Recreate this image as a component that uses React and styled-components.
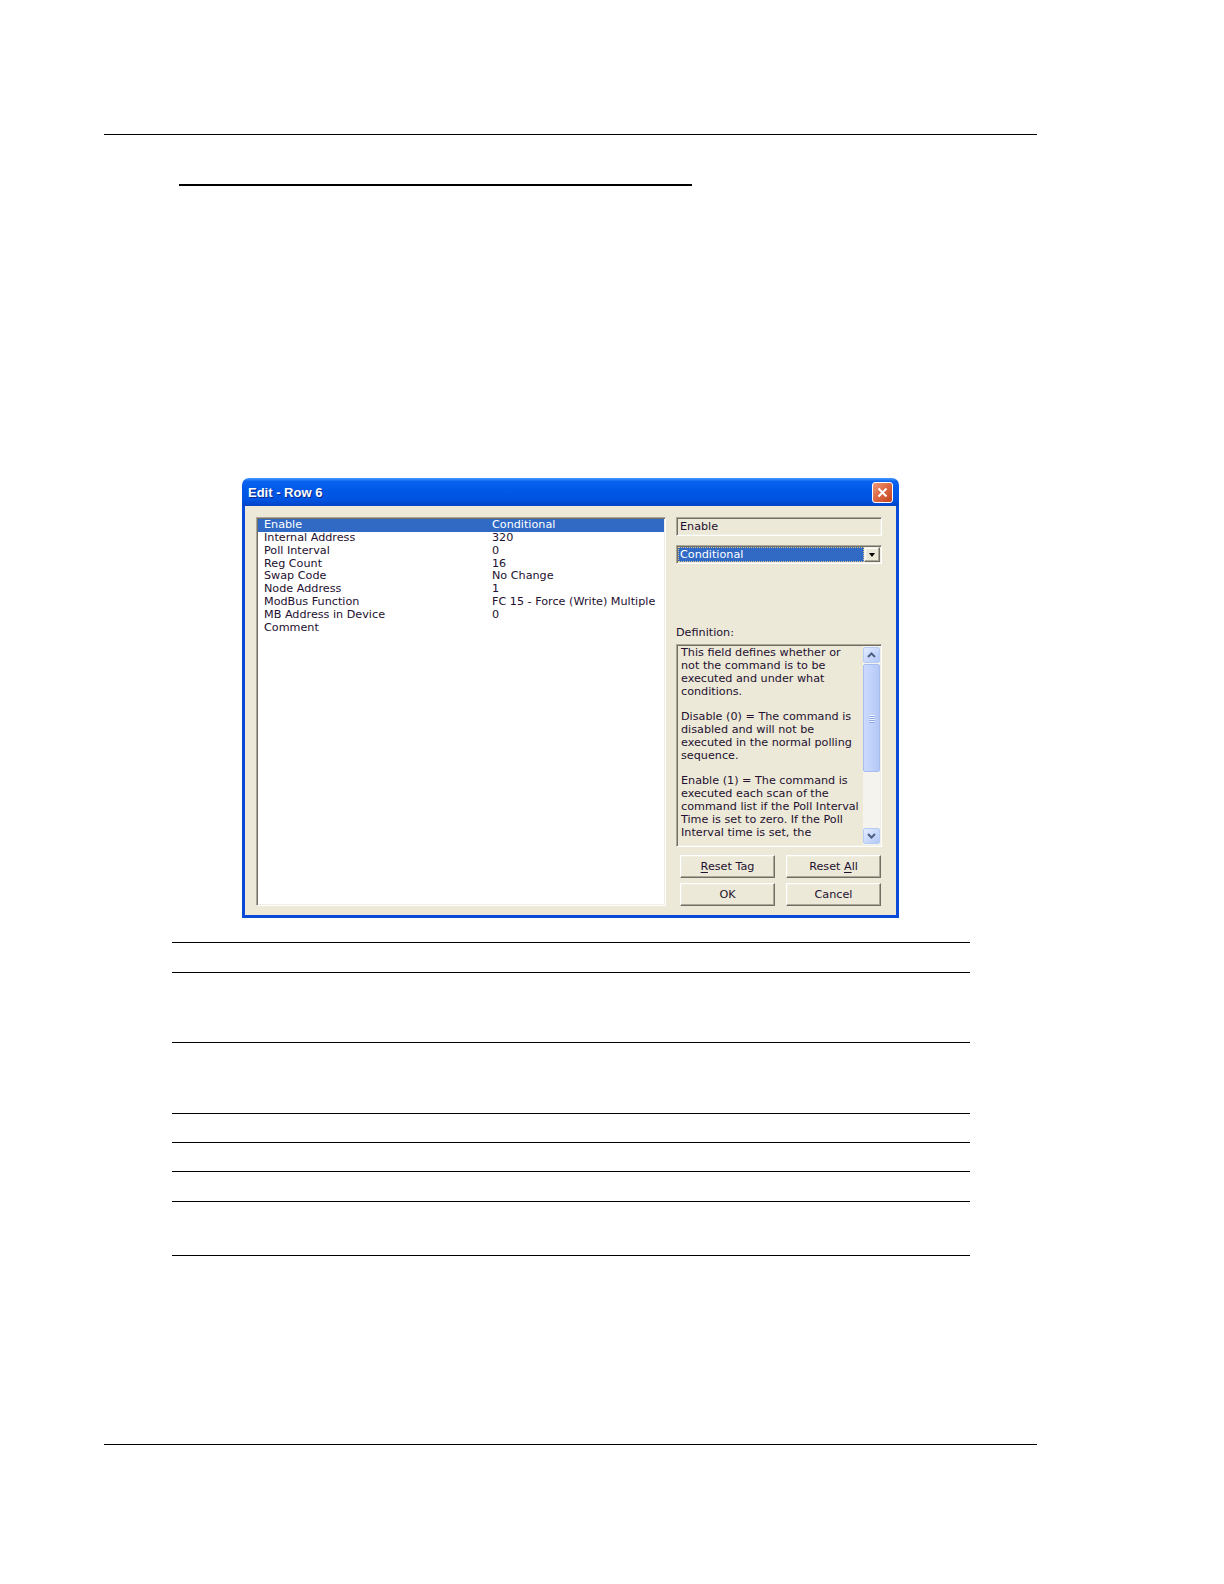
import React from "react";
import styled, { createGlobalStyle } from "styled-components";

const GlobalStyle = createGlobalStyle`
    html, body {
        margin: 0;
        padding: 0;
        overflow: hidden;
        background: #ffffff;
    }
    body {
        font-family: "DejaVu Sans", "Liberation Sans", sans-serif;
        line-height: 0;
    }
`;

const Page = styled.div`
    width: 1224px;
    height: 1584px;
    overflow: hidden;
    padding-top: 134px;
    box-sizing: border-box;
    background: #ffffff;
    display: flex;
    flex-direction: column;
    line-height: normal;
`;

const PageRule = styled.div`
    margin-left: 104px;
    width: 933px;
    border-top: 1px solid #000;
    margin-top: ${(p) => p.$top || 0}px;
`;

const HeadingRule = styled.div`
    margin: 49px 0 0 179px;
    width: 513px;
    border-top: 2px solid #000;
`;

/* ---------- dialog ---------- */

const Window = styled.div`
    margin: 292px 0 0 242px;
    width: 657px;
    display: flex;
    flex-direction: column;
    font-family: "DejaVu Sans", sans-serif;
    font-size: 11.2px;
    color: #241030;
`;

const TitleBar = styled.div`
    height: 28px;
    box-sizing: border-box;
    border-radius: 7px 7px 0 0;
    background: linear-gradient(
        180deg,
        #4a9bff 0%,
        #0a62f0 12%,
        #0058e8 45%,
        #0052df 80%,
        #0043c4 100%
    );
    display: flex;
    align-items: center;
    justify-content: space-between;
    padding: 0 6px;
`;

const Title = styled.span`
    font-family: "Liberation Sans", Arial, sans-serif;
    font-weight: 700;
    font-size: 13px;
    color: #ffffff;
    text-shadow: 1px 1px 0 #0a2a8c;
`;

const CloseButton = styled.div`
    width: 21px;
    height: 21px;
    box-sizing: border-box;
    border: 1px solid #ffffff;
    border-radius: 3px;
    background: linear-gradient(135deg, #ee9b7c 0%, #dd6a46 45%, #c4421d 100%);
    display: flex;
    align-items: center;
    justify-content: center;
`;

const Body = styled.div`
    height: 412px;
    box-sizing: border-box;
    background: #ece9d8;
    border: 3px solid #0a4ad8;
    border-top: none;
    padding: 11px 13px 9px 11px;
    display: flex;
    gap: 10px;
`;

const sunken = `
    border-top: 1px solid #aca899;
    border-left: 1px solid #aca899;
    border-right: 1px solid #ffffff;
    border-bottom: 1px solid #ffffff;
    box-shadow: inset 1px 1px 0 #716f64, inset -1px -1px 0 #f1efe2;
`;

const ListBox = styled.div`
    width: 410px;
    height: 389px;
    box-sizing: border-box;
    ${sunken}
    background: #ffffff;
    padding: 1px;
`;

const Row = styled.div`
    display: grid;
    grid-template-columns: 228px 1fr;
    height: 12.85px;
    line-height: 12.85px;
    padding-left: 6px;
    white-space: nowrap;
    background: ${(p) => (p.$selected ? "#316ac5" : "transparent")};
    color: ${(p) => (p.$selected ? "#ffffff" : "inherit")};
`;

const Side = styled.div`
    width: 206px;
    display: flex;
    flex-direction: column;
`;

const ReadField = styled.div`
    height: 19px;
    box-sizing: border-box;
    ${sunken}
    padding-left: 3px;
    line-height: 17px;
`;

const Combo = styled.div`
    margin-top: 9px;
    height: 19px;
    box-sizing: border-box;
    ${sunken}
    padding: 1px;
    display: flex;
`;

const ComboValue = styled.div`
    flex: 1;
    background: #316ac5;
    color: #ffffff;
    outline: 1px dotted #d8c890;
    outline-offset: -1px;
    padding-left: 2px;
    line-height: 15px;
`;

const DropButton = styled.div`
    width: 16px;
    box-sizing: border-box;
    background: #ece9d8;
    border-top: 1px solid #f1efe2;
    border-left: 1px solid #f1efe2;
    border-right: 1px solid #716f64;
    border-bottom: 1px solid #716f64;
    box-shadow: inset -1px -1px 0 #aca899, inset 1px 1px 0 #ffffff;
    display: flex;
    align-items: center;
    justify-content: center;

    &::after {
        content: "";
        border-left: 3.5px solid transparent;
        border-right: 3.5px solid transparent;
        border-top: 4px solid #000;
    }
`;

const Label = styled.div`
    margin-top: 62px;
    line-height: 13px;
`;

const DefBox = styled.div`
    margin-top: 5px;
    height: 203px;
    box-sizing: border-box;
    ${sunken}
    padding: 1px;
    display: flex;
`;

const DefText = styled.div`
    flex: 1;
    white-space: pre-line;
    line-height: 12.85px;
    padding: 1px 0 0 3px;
    overflow: hidden;
`;

const ScrollBar = styled.div`
    width: 17px;
    background: #f4f3ee;
    display: flex;
    flex-direction: column;
    padding: 1px 0;
    box-sizing: border-box;
`;

const ScrollArrow = styled.div`
    height: 16px;
    box-sizing: border-box;
    border: 1px solid #b6cbf3;
    border-radius: 2px;
    background: linear-gradient(135deg, #e3ebfe 0%, #c6d6fb 60%, #b3c8f6 100%);
    display: flex;
    align-items: center;
    justify-content: center;
`;

const Thumb = styled.div`
    height: 108px;
    margin-top: 1px;
    box-sizing: border-box;
    border: 1px solid #a8bdee;
    border-radius: 2px;
    background: linear-gradient(90deg, #cbd9fc 0%, #c1d2fb 50%, #b4c8f5 100%);
    display: flex;
    flex-direction: column;
    align-items: center;
    justify-content: center;
    gap: 1px;
`;

const Grip = styled.span`
    width: 6px;
    height: 1px;
    background: #eef3fe;
    box-shadow: 0 1px 0 #8eaaf0;
`;

const Track = styled.div`
    flex: 1;
`;

const Buttons = styled.div`
    margin-top: 8px;
    padding: 0 1px 0 4px;
    display: grid;
    grid-template-columns: 95px 95px;
    column-gap: 11px;
    row-gap: 5px;
`;

const Button = styled.div`
    height: 23px;
    box-sizing: border-box;
    background: #ece9d8;
    border-top: 1px solid #ffffff;
    border-left: 1px solid #ffffff;
    border-right: 1px solid #716f64;
    border-bottom: 1px solid #716f64;
    box-shadow: inset -1px -1px 0 #aca899, inset 1px 1px 0 #f1efe2;
    display: flex;
    align-items: center;
    justify-content: center;
    padding-bottom: 1px;

    & u {
        text-decoration: underline;
        text-underline-offset: 2px;
    }
`;

/* ---------- note table ---------- */

const NoteTable = styled.div`
    margin: 24px 0 0 172px;
    width: 798px;
    border-bottom: 1px solid #000;
`;

const NoteRow = styled.div`
    height: ${(p) => p.$h}px;
    box-sizing: border-box;
    border-top: 1px solid #000;
`;

const fields = [
    ["Enable", "Conditional"],
    ["Internal Address", "320"],
    ["Poll Interval", "0"],
    ["Reg Count", "16"],
    ["Swap Code", "No Change"],
    ["Node Address", "1"],
    ["ModBus Function", "FC 15 - Force (Write) Multiple"],
    ["MB Address in Device", "0"],
    ["Comment", ""],
];

const definition = `This field defines whether or
not the command is to be
executed and under what
conditions.

Disable (0) = The command is
disabled and will not be
executed in the normal polling
sequence.

Enable (1) = The command is
executed each scan of the
command list if the Poll Interval
Time is set to zero. If the Poll
Interval time is set, the`;

const noteRows = [30, 70, 71, 29, 29, 30, 54];

function Chevron({ up }) {
    return (
        <svg width="9" height="6" viewBox="0 0 9 6">
            <path
                d={up ? "M1 5 L4.5 1.5 L8 5" : "M1 1 L4.5 4.5 L8 1"}
                fill="none"
                stroke="#4d6185"
                strokeWidth="2"
            />
        </svg>
    );
}

function EditDialog() {
    return (
        <Window>
            <TitleBar>
                <Title>Edit - Row 6</Title>
                <CloseButton>
                    <svg width="11" height="11" viewBox="0 0 11 11">
                        <path d="M1.5 1.5 L9.5 9.5 M9.5 1.5 L1.5 9.5" stroke="#fff" strokeWidth="2" />
                    </svg>
                </CloseButton>
            </TitleBar>
            <Body>
                <ListBox>
                    {fields.map(([name, value], i) => (
                        <Row key={name} $selected={i === 0}>
                            <span>{name}</span>
                            <span>{value}</span>
                        </Row>
                    ))}
                </ListBox>
                <Side>
                    <ReadField>Enable</ReadField>
                    <Combo>
                        <ComboValue>Conditional</ComboValue>
                        <DropButton />
                    </Combo>
                    <Label>Definition:</Label>
                    <DefBox>
                        <DefText>{definition}</DefText>
                        <ScrollBar>
                            <ScrollArrow>
                                <Chevron up />
                            </ScrollArrow>
                            <Thumb>
                                <Grip />
                                <Grip />
                                <Grip />
                                <Grip />
                            </Thumb>
                            <Track />
                            <ScrollArrow>
                                <Chevron />
                            </ScrollArrow>
                        </ScrollBar>
                    </DefBox>
                    <Buttons>
                        <Button>
                            <span>
                                <u>R</u>eset Tag
                            </span>
                        </Button>
                        <Button>
                            <span>
                                Reset <u>A</u>ll
                            </span>
                        </Button>
                        <Button>OK</Button>
                        <Button>Cancel</Button>
                    </Buttons>
                </Side>
            </Body>
        </Window>
    );
}

export default function App() {
    return (
        <>
            <GlobalStyle />
            <Page>
                <PageRule />
                <HeadingRule />
                <EditDialog />
                <NoteTable>
                    {noteRows.map((h, i) => (
                        <NoteRow key={i} $h={h} />
                    ))}
                </NoteTable>
                <PageRule $top={188} />
            </Page>
        </>
    );
}
